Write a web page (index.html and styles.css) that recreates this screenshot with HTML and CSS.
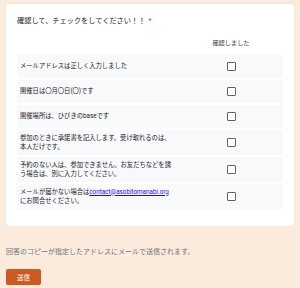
FILE: index.html
```html
<!DOCTYPE html>
<html lang="ja">
<head>
  <meta charset="UTF-8" />
  <meta name="viewport" content="width=device-width, initial-scale=1.0" />
  <title>確認</title>
  <link rel="stylesheet" href="styles.css">
</head>
<body>
  <main class="page">
    <section class="card">
      <div class="question">確認して、チェックをしてください！！<span class="required">*</span></div>
      <div class="grid-head">
        <span></span>
        <span class="col-label">確認しました</span>
      </div>
      <div class="grid">
        <label class="grid-row">
          <span class="row-text">メールアドレスは正しく入力しました</span>
          <span class="cell"><input type="checkbox" class="check"></span>
        </label>
        <label class="grid-row">
          <span class="row-text">開催日は〇月〇日(〇)です</span>
          <span class="cell"><input type="checkbox" class="check"></span>
        </label>
        <label class="grid-row">
          <span class="row-text">開催場所は、ひびきのbaseです</span>
          <span class="cell"><input type="checkbox" class="check"></span>
        </label>
        <label class="grid-row">
          <span class="row-text">参加のときに承諾書を記入します。受け取れるのは、本人だけです。</span>
          <span class="cell"><input type="checkbox" class="check"></span>
        </label>
        <label class="grid-row">
          <span class="row-text">予約のない人は、参加できません。お友だちなどを誘う場合は、別に入力してください。</span>
          <span class="cell"><input type="checkbox" class="check"></span>
        </label>
        <label class="grid-row">
          <span class="row-text">メールが届かない場合は<a href="mailto:contact@asobitomanabi.org">contact@asobitomanabi.org</a>にお問合せください。</span>
          <span class="cell"><input type="checkbox" class="check"></span>
        </label>
      </div>
    </section>

    <p class="note">回答のコピーが指定したアドレスにメールで送信されます。</p>
    <button class="btn-submit">送信</button>
  </main>
</body>
</html>
```

FILE: styles.css
```css
body {
  margin: 0;
  font-family: Roboto, "Noto Sans CJK JP", sans-serif;
  background-color: #FAEBDC;
  color: #202124;
}
.page {
  padding: 4px 6px;
}
.card {
  background-color: #FFFFFF;
  border-radius: 3px;
  padding: 11px 11px 17px;
  box-shadow: 0 0 0 0.5px #EFE3D8;
}
.question {
  font-size: 7.2px;
  line-height: 11px;
}
.required {
  color: #D93025;
  margin-left: 3px;
}
.grid-head {
  display: grid;
  grid-template-columns: 1fr 70px;
  padding-right: 17px;
  margin-top: 12px;
  margin-bottom: 7px;
  font-size: 6.2px;
  line-height: 10px;
  color: #3C4043;
}
.col-label {
  text-align: center;
}
.grid {
  display: flex;
  flex-direction: column;
  gap: 2px;
}
.grid-row {
  display: grid;
  grid-template-columns: 1fr 70px;
  align-items: center;
  min-height: 23px;
  box-sizing: border-box;
  padding: 3.5px 17px 3.5px 3px;
  background-color: #F8F9FA;
  border-radius: 1px;
  font-size: 6.3px;
  line-height: 9px;
}
.row-text {
  max-width: 154px;
}
.row-text a {
  color: #1A0DFF;
}
.cell {
  display: flex;
  justify-content: center;
}
.check {
  appearance: none;
  margin: 0;
  width: 9px;
  height: 9px;
  border: 1px solid #5F6368;
  border-radius: 1px;
  background: #FFFFFF;
}
.note {
  margin: 21px 0 0;
  font-size: 7px;
  line-height: 10px;
  color: #70757A;
}
.btn-submit {
  margin-top: 12px;
  width: 35px;
  height: 16px;
  padding: 0;
  border: none;
  border-radius: 2px;
  background-color: #CC5A22;
  color: #FFFFFF;
  font-family: inherit;
  font-size: 6.5px;
}
```
